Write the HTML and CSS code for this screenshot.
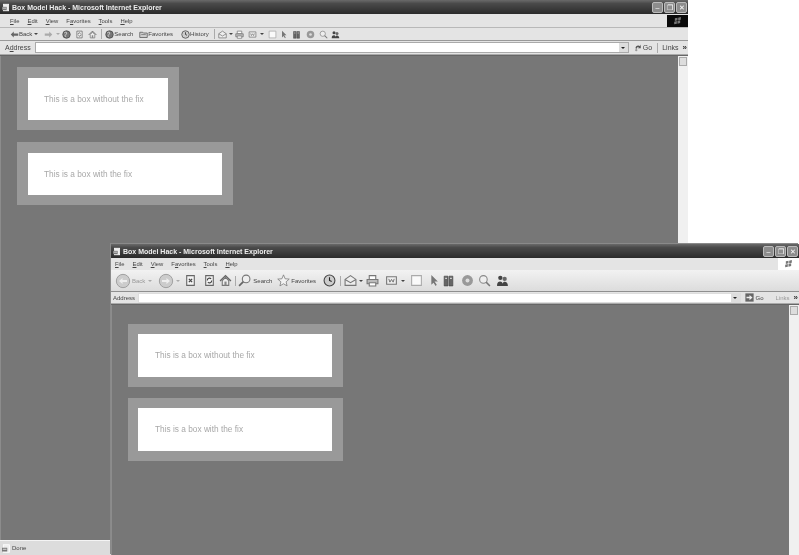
FILE: index.html
```html
<!DOCTYPE html>
<html lang="en">
<head>
    <meta charset="UTF-8">
    <meta name="viewport" content="width=device-width, initial-scale=1.0">
    <title>Box Model Hack</title>
    <link rel="stylesheet" href="styles.css">
</head>
<body>
    <svg class="defs" width="0" height="0">
        <symbol id="ie" viewBox="0 0 12 12"><rect x="2" y="1" width="8" height="10" fill="#eee" stroke="#fff"/><path d="M0 5h7v5H0z" fill="#777"/><path d="M1 7h5" stroke="#fff"/></symbol>
        <symbol id="sheet" viewBox="0 0 12 12"><path d="M2.5 1.5h7v9h-7z" fill="#f4f4f4" stroke="#666"/><path d="M4.5 4.5l3 3m0-3l-3 3" stroke="#444" stroke-width="1.2"/></symbol>
        <symbol id="refresh" viewBox="0 0 12 12"><path d="M2.5 1.5h7v9h-7z" fill="#f4f4f4" stroke="#666"/><path d="M4 6a2 2 0 0 1 3.500-1.500M8 6a2 2 0 0 1-3.500 1.500" fill="none" stroke="#444"/></symbol>
        <symbol id="home" viewBox="0 0 12 12"><path d="M1 6.500L6 1.500l5 5" fill="none" stroke="#666" stroke-width="1.300"/><path d="M3 6v4.500h6V6L6 3z" fill="#eee" stroke="#777"/><path d="M5 7h2v3.500H5z" fill="#888"/></symbol>
        <symbol id="globe" viewBox="0 0 12 12"><circle cx="6" cy="6" r="5" fill="#777" stroke="#444"/><path d="M3 4c2-2 4-1 3 1S3 7 5 9" fill="none" stroke="#ddd" stroke-width="1.2"/></symbol>
        <symbol id="mag" viewBox="0 0 12 12"><circle cx="7.5" cy="4.5" r="3.500" fill="#eee" stroke="#777"/><path d="M5 7l-4 4" stroke="#666" stroke-width="1.600"/></symbol>
        <symbol id="star" viewBox="0 0 12 12"><path d="M6 .8l1.500 3.600 3.800.3-2.900 2.500.9 3.800L6 9l-3.300 2 .9-3.800L.7 4.700l3.800-.3z" fill="#f2f2f2" stroke="#777" stroke-width=".7"/></symbol>
        <symbol id="folder" viewBox="0 0 12 12"><path d="M1 3h4l1 1h5v6H1z" fill="#ccc" stroke="#555"/><path d="M3 6h6" stroke="#777"/></symbol>
        <symbol id="clock" viewBox="0 0 12 12"><circle cx="6" cy="6" r="5" fill="#ccc" stroke="#444"/><path d="M6 3v3l2 1" fill="none" stroke="#222"/></symbol>
        <symbol id="mail" viewBox="0 0 12 12"><path d="M1 5l5-3.500L11 5v5.500H1z" fill="#eee" stroke="#777"/><path d="M1 5l5 3 5-3" fill="none" stroke="#777"/></symbol>
        <symbol id="print" viewBox="0 0 12 12"><path d="M3 1.500h6V5H3z" fill="#fff" stroke="#777"/><path d="M1 5h10v4H1z" fill="#bbb" stroke="#777"/><path d="M3 8h6v3H3z" fill="#fff" stroke="#777"/></symbol>
        <symbol id="word" viewBox="0 0 12 12"><path d="M1.500 2.500h9v7h-9z" fill="#eee" stroke="#777"/><path d="M3.500 4.500l1 3 1.500-2.500 1.500 2.500 1-3" fill="none" stroke="#666" stroke-width=".8"/></symbol>
        <symbol id="note" viewBox="0 0 12 12"><path d="M1.500 1.500h9v9h-9z" fill="#fafafa" stroke="#aaa"/></symbol>
        <symbol id="cursor" viewBox="0 0 12 12"><path d="M4 1v9l2-2 2 3 1-1-2-3h3z" fill="#777"/></symbol>
        <symbol id="book" viewBox="0 0 12 12"><path d="M2 2h3.500v9H2zM6.500 2H10v9H6.500z" fill="#666" stroke="#444" stroke-width=".6"/><path d="M3 4h1.500M7.500 4H9" stroke="#ddd"/></symbol>
        <symbol id="disc" viewBox="0 0 12 12"><circle cx="6" cy="6" r="5" fill="#999"/><circle cx="6" cy="6" r="1.800" fill="#ddd"/></symbol>
        <symbol id="research" viewBox="0 0 12 12"><circle cx="5" cy="5" r="3.500" fill="#eee" stroke="#888"/><path d="M7.500 7.500L11 11" stroke="#777" stroke-width="1.400"/></symbol>
        <symbol id="people" viewBox="0 0 12 12"><circle cx="4" cy="3.500" r="2" fill="#444"/><circle cx="8" cy="4.500" r="2" fill="#666"/><path d="M1 10c0-4 5-4 5-1 1-3 5-2 5 2H1z" fill="#444"/></symbol>
        <symbol id="arrow-l" viewBox="0 0 12 12"><path d="M1 6l4-4v2.500h6v3H5V10z" fill="#666"/></symbol>
        <symbol id="arrow-r" viewBox="0 0 12 12"><path d="M11 6L7 2v2.500H1v3h6V10z" fill="#aaa"/></symbol>
        <symbol id="round-l" viewBox="0 0 18 18"><circle cx="9" cy="9" r="7.500" fill="#ccc" stroke="#999"/><path d="M4.500 9l4-3.500V8h5v2h-5v2.500z" fill="#eee"/></symbol>
        <symbol id="round-r" viewBox="0 0 18 18"><circle cx="9" cy="9" r="7.500" fill="#ccc" stroke="#999"/><path d="M13.500 9l-4-3.500V8h-5v2h5v2.500z" fill="#eee"/></symbol>
        <symbol id="go" viewBox="0 0 12 12"><path d="M.5.500h11v11H.5z" fill="#666"/><path d="M10 6L6 2.500V5H2v2h4v2.500z" fill="#eee"/></symbol>
        <symbol id="go-back" viewBox="0 0 12 12"><path d="M2 7c0-3 3-5 6-3l1-2v5H5l1.500-1.500C5 5 3.500 6 3.500 8z" fill="#555"/><circle cx="3" cy="9.500" r="1.500" fill="#999"/></symbol>
        <symbol id="flag" viewBox="0 0 12 12"><path d="M2 2l4-1v4l-4 1zM7 1l4-1v4L7 5zM1 7l4-1v4l-4 1zM6 6l4-1v4l-4 1z" fill="#777"/></symbol>
    </svg>

    <!-- window behind -->
    <section class="window window-back">
        <header class="titlebar">
            <svg class="title-icon"><use href="#ie"/></svg>
            <span class="title-text">Box Model Hack - Microsoft Internet Explorer</span>
            <span class="win-btns"><i class="win-btn">&#8211;</i><i class="win-btn">&#10064;</i><i class="win-btn">&#10005;</i></span>
        </header>
        <nav class="menubar">
            <span><u>F</u>ile</span><span><u>E</u>dit</span><span><u>V</u>iew</span><span>F<u>a</u>vorites</span><span><u>T</u>ools</span><span><u>H</u>elp</span>
            <span class="flag-box"><svg class="flag-icon"><use href="#flag"/></svg></span>
        </nav>
        <div class="toolbar">
            <svg class="ico"><use href="#arrow-l"/></svg><span class="tool-label">Back</span><i class="caret ml-2"></i>
            <svg class="ico ml-6"><use href="#arrow-r"/></svg><i class="caret light ml-3"></i>
            <svg class="ico ml-2"><use href="#globe"/></svg><svg class="ico ml-4"><use href="#refresh"/></svg><svg class="ico ml-4"><use href="#home"/></svg>
            <i class="sep ml-4"></i>
            <svg class="ico ml-3"><use href="#globe"/></svg><span class="tool-label">Search</span>
            <svg class="ico ml-6"><use href="#folder"/></svg><span class="tool-label">Favorites</span>
            <svg class="ico ml-8"><use href="#clock"/></svg><span class="tool-label">History</span>
            <i class="sep ml-5"></i>
            <svg class="ico ml-3"><use href="#mail"/></svg><i class="caret ml-2"></i>
            <svg class="ico ml-2"><use href="#print"/></svg><svg class="ico ml-4"><use href="#word"/></svg><i class="caret ml-3"></i>
            <svg class="ico ml-4"><use href="#note"/></svg><svg class="ico ml-2"><use href="#cursor"/></svg><svg class="ico ml-4"><use href="#book"/></svg><svg class="ico ml-5"><use href="#disc"/></svg><svg class="ico ml-4"><use href="#research"/></svg><svg class="ico ml-3"><use href="#people"/></svg>
        </div>
        <div class="addressbar">
            <span class="address-label">A<u>d</u>dress</span>
            <span class="address-input"><i class="drop"><i class="caret dark"></i></i></span>
            <svg class="ico ml-5"><use href="#go-back"/></svg><span class="tool-label big">Go</span>
            <i class="sep ml-5"></i>
            <span class="tool-label big ml-4">Links</span><b class="more">&raquo;</b>
        </div>
        <main class="content">
            <div class="page">
                <div class="box box-narrow"><p class="box-inner">This is a box without the fix</p></div>
                <div class="box"><p class="box-inner">This is a box with the fix</p></div>
            </div>
            <div class="scrollbar"><i class="scroll-up"></i></div>
        </main>
        <footer class="statusbar"><svg class="ico"><use href="#ie"/></svg><span>Done</span></footer>
    </section>

    <!-- window in front -->
    <section class="window window-front">
        <header class="titlebar">
            <svg class="title-icon"><use href="#ie"/></svg>
            <span class="title-text">Box Model Hack - Microsoft Internet Explorer</span>
            <span class="win-btns"><i class="win-btn">&#8211;</i><i class="win-btn">&#10064;</i><i class="win-btn">&#10005;</i></span>
        </header>
        <nav class="menubar">
            <span><u>F</u>ile</span><span><u>E</u>dit</span><span><u>V</u>iew</span><span>F<u>a</u>vorites</span><span><u>T</u>ools</span><span><u>H</u>elp</span>
            <span class="flag-box"><svg class="flag-icon"><use href="#flag"/></svg></span>
        </nav>
        <div class="toolbar">
            <svg class="ico-round"><use href="#round-l"/></svg><span class="tool-label faded ml-1">Back</span><i class="caret light ml-3"></i>
            <svg class="ico-round ml-6"><use href="#round-r"/></svg><i class="caret light ml-2"></i>
            <svg class="ico-lg ml-4"><use href="#sheet"/></svg><svg class="ico-lg ml-6"><use href="#refresh"/></svg><svg class="ico-lg ml-3"><use href="#home"/></svg>
            <i class="sep ml-3"></i>
            <svg class="ico-lg ml-2"><use href="#mag"/></svg><span class="tool-label ml-2">Search</span>
            <svg class="ico-lg ml-5"><use href="#star"/></svg><span class="tool-label ml-1">Favorites</span>
            <svg class="ico-lg ml-7"><use href="#clock"/></svg>
            <i class="sep ml-4"></i>
            <svg class="ico-lg ml-3"><use href="#mail"/></svg><i class="caret ml-2"></i>
            <svg class="ico-lg ml-3"><use href="#print"/></svg>
            <svg class="ico-lg ml-6"><use href="#word"/></svg><i class="caret ml-3"></i>
            <svg class="ico-lg ml-5"><use href="#note"/></svg><svg class="ico-lg ml-4"><use href="#cursor"/></svg><svg class="ico-lg ml-2"><use href="#book"/></svg><svg class="ico-lg ml-6"><use href="#disc"/></svg><svg class="ico-lg ml-4"><use href="#research"/></svg><svg class="ico-lg ml-5"><use href="#people"/></svg>
        </div>
        <div class="addressbar">
            <span class="address-label faded">Address</span>
            <span class="address-input"><i class="drop"><i class="caret dark"></i></i></span>
            <svg class="ico ml-4"><use href="#go"/></svg><span class="tool-label ml-2">Go</span>
            <span class="tool-label faded links-label">Links</span><b class="more">&raquo;</b>
        </div>
        <main class="content">
            <div class="page">
                <div class="box"><p class="box-inner">This is a box without the fix</p></div>
                <div class="box"><p class="box-inner">This is a box with the fix</p></div>
            </div>
            <div class="scrollbar"><i class="scroll-up"></i></div>
        </main>
    </section>
</body>
</html>
```

FILE: styles.css
```css
* {
    box-sizing: border-box;
}
html, body {
    margin: 0;
    height: 100%;
}
body {
    background-color: #fff;
    overflow: hidden;
    font-family: "Liberation Sans", Arial, sans-serif;
    position: relative;
}
.defs {
    position: absolute;
}
i {
    font-style: normal;
}

.ml-1 { margin-left: 1px; }
.ml-2 { margin-left: 2px; }
.ml-3 { margin-left: 3px; }
.ml-4 { margin-left: 4px; }
.ml-5 { margin-left: 5px; }
.ml-6 { margin-left: 6px; }
.ml-7 { margin-left: 7px; }
.ml-8 { margin-left: 8px; }

/* the two browser windows sit on a free desktop */
.window {
    position: absolute;
    width: 688px;
    display: flex;
    flex-direction: column;
    background-color: #e4e4e4;
    overflow: hidden;
}
.window-back {
    left: 0;
    top: 0;
    height: 555px;
}
.window-front {
    left: 111px;
    top: 244px;
    height: 311px;
    box-shadow: -1px -1px 0 #8a8a8a;
}

/* the source picture is a soft scan, so everything gets a touch of blur */
.titlebar, .menubar, .toolbar, .addressbar, .statusbar, .box {
    filter: blur(.35px);
}

.titlebar {
    height: 14px;
    flex: none;
    display: flex;
    align-items: center;
    padding: 0 1px 0 2px;
    color: #eee;
    background: linear-gradient(#6a6a6a, #4a4a4a 25%, #333 80%, #2a2a2a);
}
.title-icon {
    width: 8px;
    height: 9px;
    margin-right: 2px;
}
.title-text {
    font-size: 7px;
    font-weight: bold;
    white-space: nowrap;
}
.win-btns {
    margin-left: auto;
    display: flex;
    gap: 1px;
}
.win-btn {
    width: 11px;
    height: 11px;
    background-color: #8d8d8d;
    border: 1px solid #bbb;
    border-radius: 2px;
    color: #fff;
    font-size: 7px;
    line-height: 9px;
    text-align: center;
}

.menubar {
    height: 14px;
    flex: none;
    display: flex;
    align-items: center;
    padding-left: 10px;
    gap: 8px;
    font-size: 5.9px;
    color: #444;
    border-bottom: 1px solid #b8b8b8;
}
.flag-box {
    margin-left: auto;
    width: 21px;
    height: 12px;
    background-color: #0a0a0a;
    display: flex;
    align-items: center;
    justify-content: center;
}
.flag-icon {
    width: 9px;
    height: 8px;
}

.toolbar {
    height: 13px;
    flex: none;
    display: flex;
    align-items: center;
    padding-left: 10px;
    border-bottom: 1px solid #999;
}
.ico {
    width: 9px;
    height: 9px;
    flex: none;
}
.ico-lg {
    width: 13px;
    height: 13px;
    flex: none;
}
.ico-round {
    width: 16px;
    height: 16px;
    flex: none;
}
.tool-label {
    font-size: 6px;
    color: #444;
    white-space: nowrap;
}
.tool-label.big {
    font-size: 7px;
}
.faded {
    color: #999;
}
.caret {
    width: 0;
    height: 0;
    flex: none;
    border-left: 2px solid transparent;
    border-right: 2px solid transparent;
    border-top: 2px solid #444;
}
.caret.light {
    border-top-color: #aaa;
}
.caret.dark {
    border-top-color: #222;
}
.sep {
    width: 1px;
    height: 10px;
    flex: none;
    background-color: #aaa;
}

.addressbar {
    height: 14px;
    flex: none;
    display: flex;
    align-items: center;
    padding: 0 1px 0 5px;
    border-bottom: 1px solid #aaa;
}
.address-label {
    font-size: 7px;
    color: #444;
    margin-right: 4px;
}
.address-input {
    flex: 1;
    height: 11px;
    background-color: #fff;
    border: 1px solid #aaa;
    display: flex;
    justify-content: flex-end;
}
.drop {
    width: 9px;
    background-color: #ddd;
    display: flex;
    align-items: center;
    justify-content: center;
}
.links-label {
    margin-left: 12px;
}
.more {
    font-size: 8px;
    color: #333;
    margin-left: 4px;
}

.content {
    flex: 1;
    min-height: 0;
    display: flex;
    background-color: #777;
    border-top: 1px solid #666;
}
.page {
    flex: 1;
    padding: 11px 0 0 16px;
    display: flex;
    flex-direction: column;
    align-items: flex-start;
    gap: 12px;
    border-left: 1px solid #8c8c8c;
}
.box {
    background-color: #999;
    padding: 11px 11px 10px;
}
.box-inner {
    margin: 0;
    width: 194px;
    height: 42px;
    background-color: #fff;
    color: #a8a8a8;
    font-size: 8.3px;
    line-height: 42px;
    padding-left: 16px;
    white-space: nowrap;
}
.box-narrow .box-inner {
    width: 140px;
}
.scrollbar {
    width: 10px;
    flex: none;
    background-color: #f0f0f0;
    padding: 1px;
}
.scroll-up {
    display: block;
    height: 9px;
    background-color: #ddd;
    border: 1px solid #aaa;
}

.statusbar {
    height: 15px;
    flex: none;
    display: flex;
    align-items: center;
    gap: 1px;
    padding-left: 2px;
    font-size: 6px;
    color: #444;
    background-color: #dcdcdc;
    border-top: 1px solid #f4f4f4;
}

/* front window differences */
.window-front .menubar {
    height: 12px;
    border-bottom: none;
    padding-left: 4px;
}
.window-front .flag-box {
    background-color: #fff;
    height: 12px;
}
.window-front .toolbar {
    height: 22px;
    padding-left: 4px;
    background: linear-gradient(#f2f2f2, #dcdcdc);
    border-bottom: 1px solid #8f8f8f;
}
.window-front .addressbar {
    height: 12px;
    padding-left: 2px;
}
.window-front .address-label {
    font-size: 6px;
    margin-right: 3px;
}
.window-front .address-input {
    border-color: #ddd;
    height: 10px;
}
.window-front .page {
    padding: 19px 0 0 16px;
    gap: 11px;
}
.window-front .box {
    padding: 10px 11px 10px 10px;
}
.window-front .box-inner {
    height: 43px;
    line-height: 43px;
    padding-left: 17px;
}
```
